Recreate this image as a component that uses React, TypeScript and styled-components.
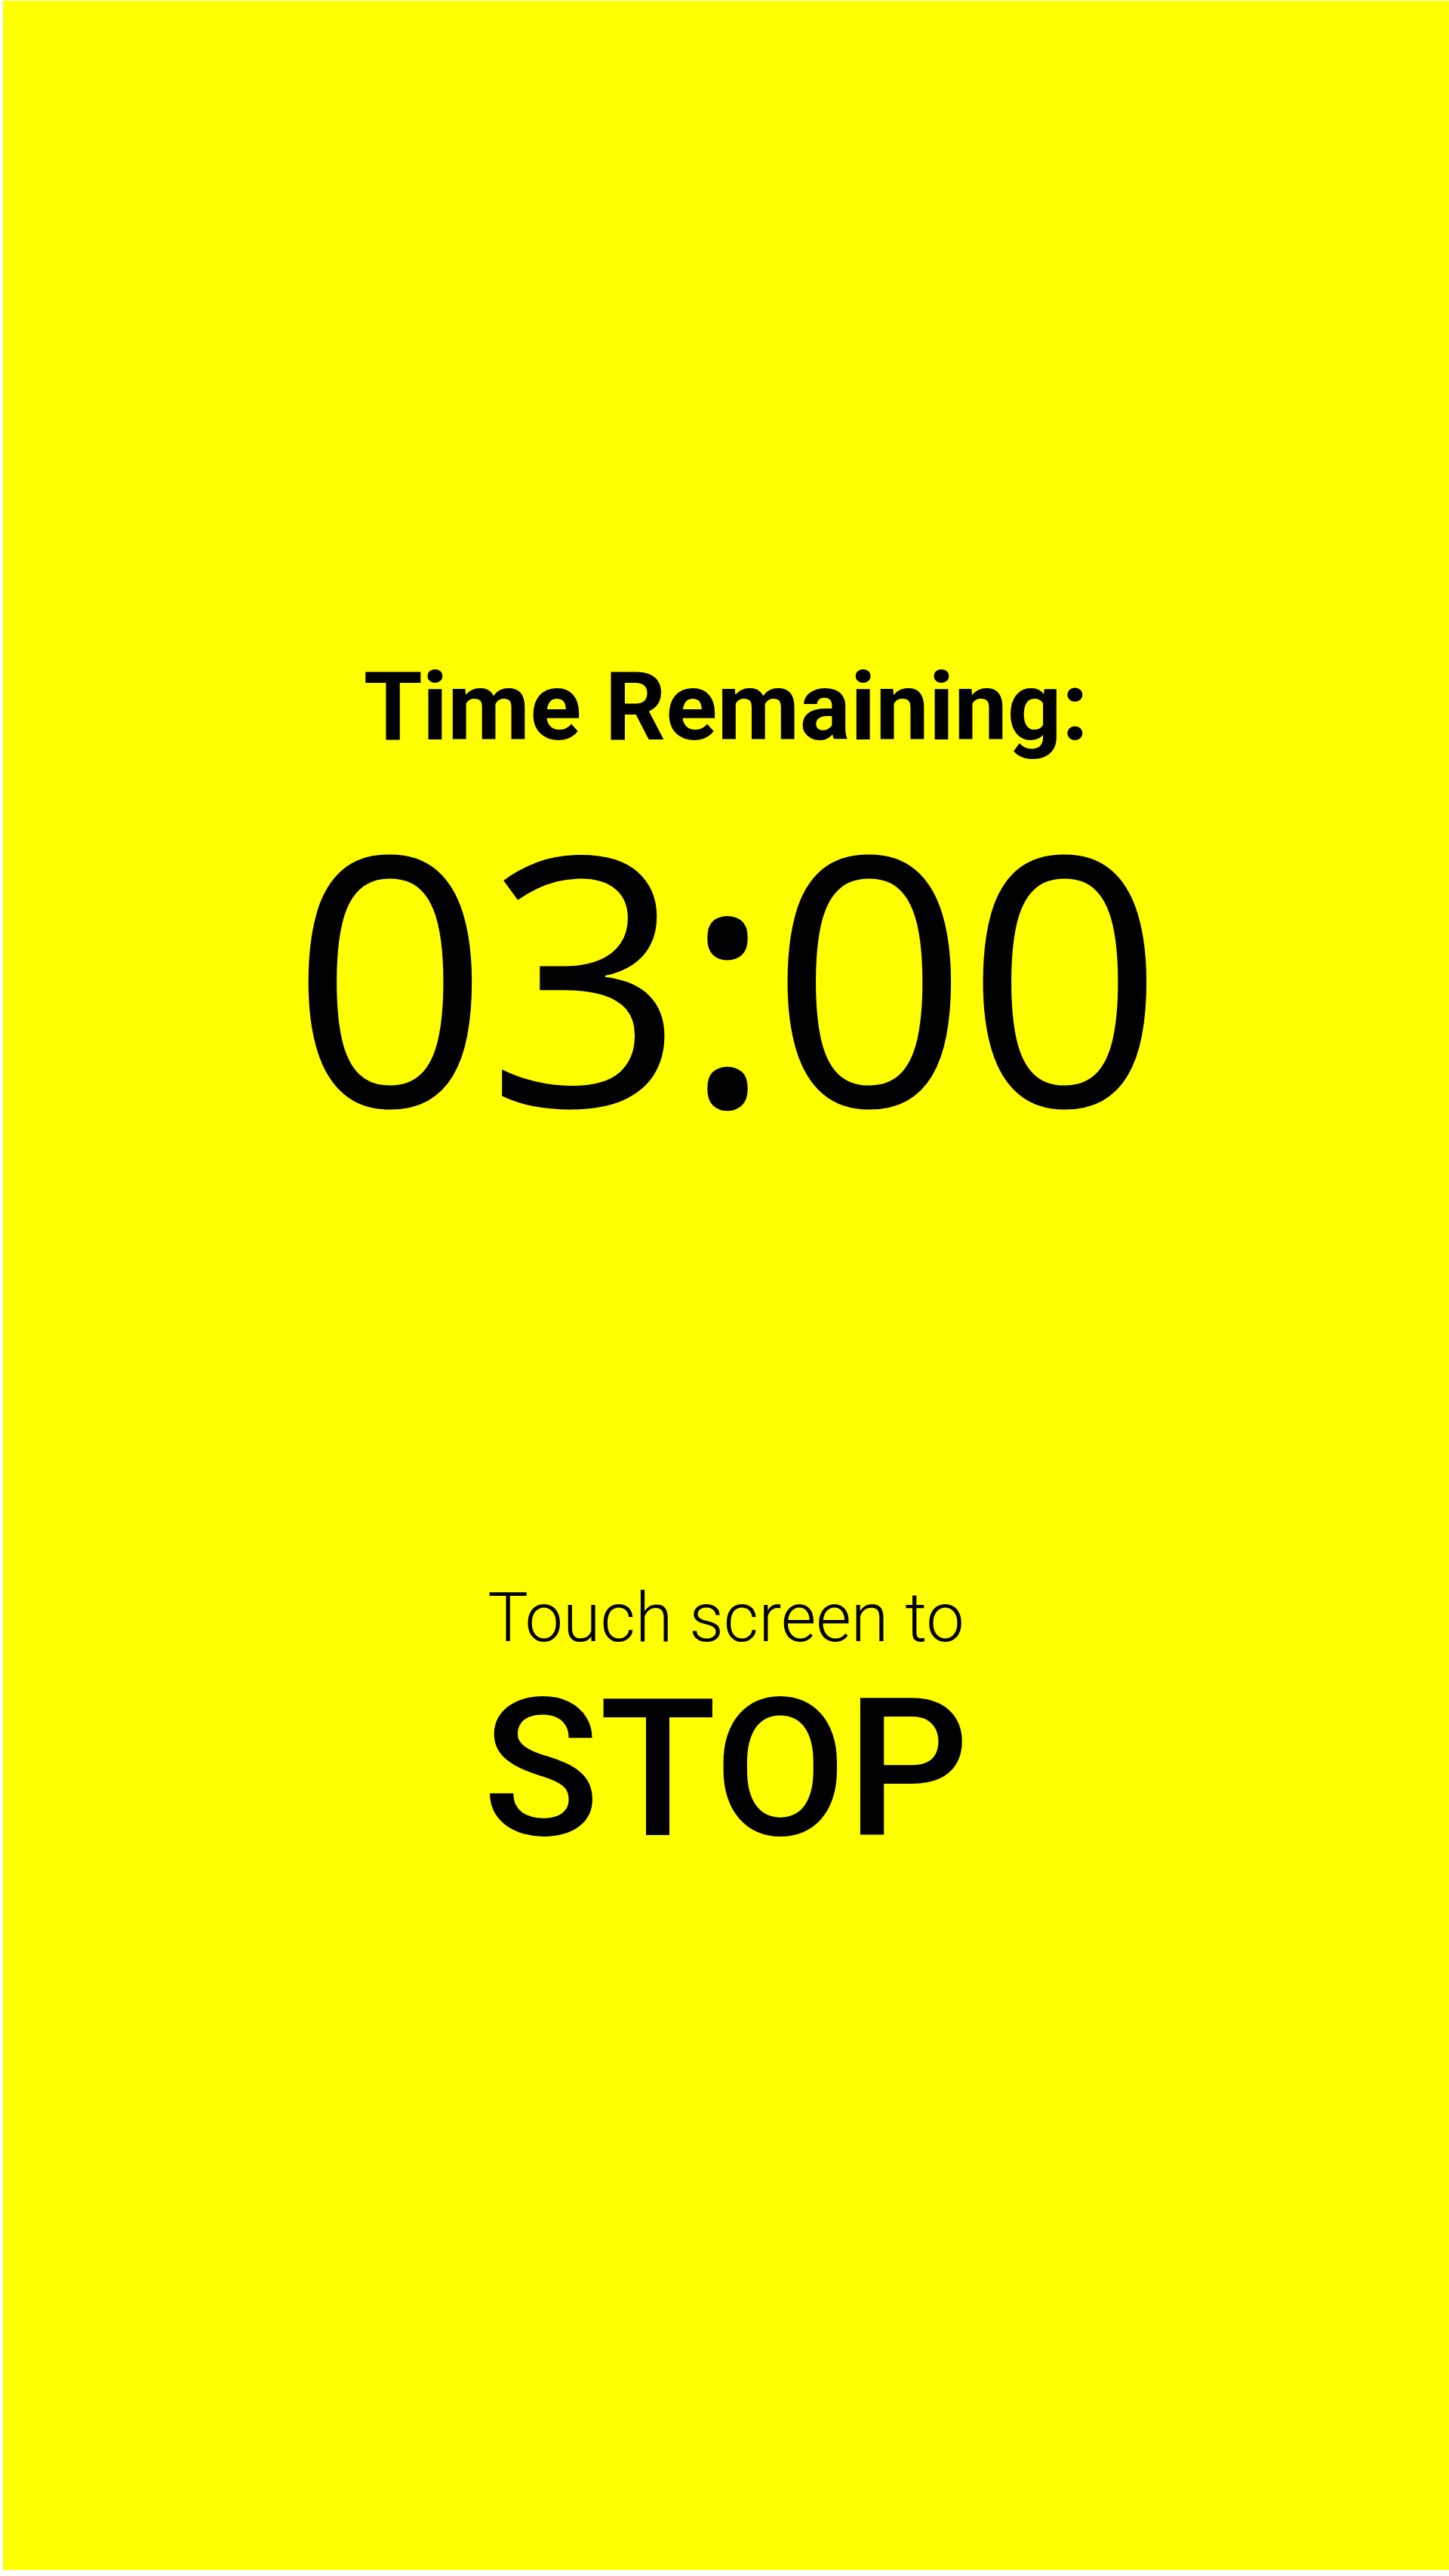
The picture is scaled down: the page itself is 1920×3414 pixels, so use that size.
import React from "react";
import styled, { createGlobalStyle } from "styled-components";

const GlobalStyle = createGlobalStyle`
  html, body {
    margin: 0;
    padding: 0;
    background: #ffffff;
  }
  #root {
    padding: 1px 0 8px 4px;
  }
`;

const Screen = styled.div`
  height: 3405px;
  background-color: #ffff00;
  color: #000000;
  display: flex;
  flex-direction: column;
  align-items: center;
  padding-top: 861px;
  box-sizing: border-box;
  cursor: pointer;
  user-select: none;
`;

const Countdown = styled.div`
  display: flex;
  flex-direction: column;
  align-items: center;
  gap: 45px;
`;

const Label = styled.div`
  font-family: Roboto, "Liberation Sans", sans-serif;
  font-weight: 700;
  font-size: 126px;
  line-height: 1.2;
  white-space: nowrap;
`;

const Timer = styled.div`
  font-family: "Open Sans", "Noto Sans", sans-serif;
  font-weight: 400;
  font-size: 460px;
  line-height: 1;
  letter-spacing: -4px;
  white-space: nowrap;
`;

const Prompt = styled.div`
  margin-top: 582px;
  display: flex;
  flex-direction: column;
  align-items: center;
  gap: 27px;
`;

const Hint = styled.div`
  font-family: Roboto, "Liberation Sans", sans-serif;
  font-weight: 300;
  font-size: 90px;
  line-height: 1;
  white-space: nowrap;
`;

const Action = styled.div`
  font-family: Roboto, "Liberation Sans", sans-serif;
  font-weight: 500;
  font-size: 255px;
  line-height: 1;
  white-space: nowrap;
`;

const formatTime = (seconds: number) => {
  const m = Math.floor(seconds / 60);
  const s = seconds % 60;
  return `${String(m).padStart(2, "0")}:${String(s).padStart(2, "0")}`;
};

const App: React.FC = () => {
  const remaining = 180;

  return (
    <>
      <GlobalStyle />
      <Screen>
        <Countdown>
          <Label>Time Remaining:</Label>
          <Timer>{formatTime(remaining)}</Timer>
        </Countdown>
        <Prompt>
          <Hint>Touch screen to</Hint>
          <Action>STOP</Action>
        </Prompt>
      </Screen>
    </>
  );
};

export default App;
